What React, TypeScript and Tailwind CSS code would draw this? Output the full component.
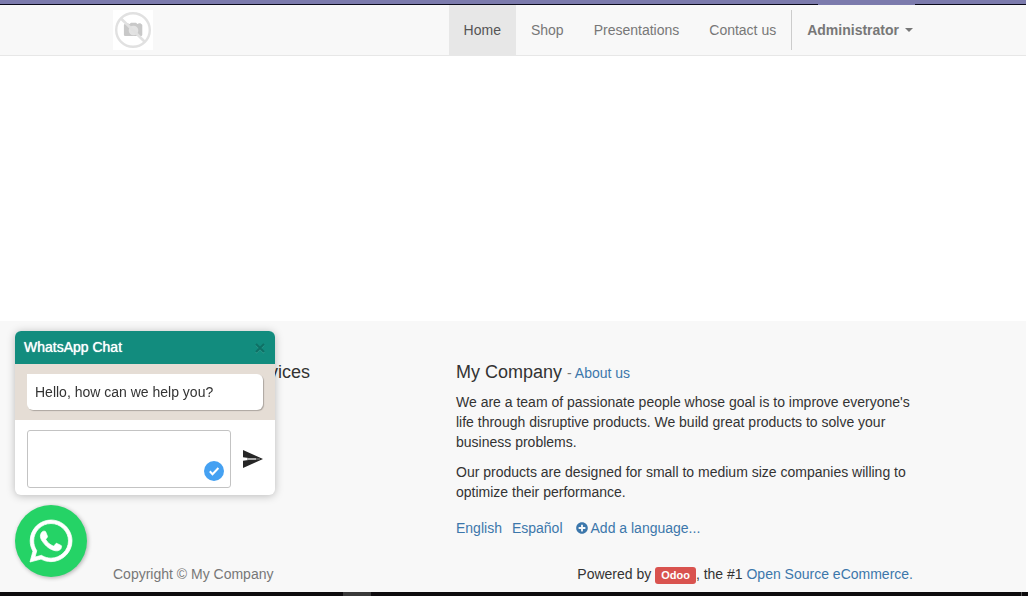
import { useState } from "react";
import { FaPlusCircle, FaWhatsapp } from "react-icons/fa";

const navItems = [
  { label: "Home", active: true },
  { label: "Shop", active: false },
  { label: "Presentations", active: false },
  { label: "Contact us", active: false },
];

function PlaceholderLogo() {
  return (
    <svg viewBox="0 0 40 40" className="size-10 bg-white" role="img" aria-label="Company logo">
      <path
        d="M12 14h1v-.8h2.500v.8h1l1.500-1.300h5l1.500 1.300h.8v-.8h2.500v.8q1.500 0 1.500 1.200v9.600q0 1.200-1.200 1.200h-16q-1.200 0-1.200-1.200v-9.600q0-1.200 1.100-1.200z"
        fill="#c8c8c8"
      />
      <circle cx="20.500" cy="20.500" r="4.800" fill="#e3e3e3" />
      <circle cx="20" cy="20" r="16.800" fill="none" stroke="#e1e1e1" strokeWidth="2.400" />
      <path d="M8 8.500L32 32" stroke="#e1e1e1" strokeWidth="2.600" />
    </svg>
  );
}

function Header() {
  return (
    <header>
      <div className="flex h-[5px] flex-col bg-[#7c7bad]">
        <div className="mt-auto flex h-px">
          <div className="w-[818px] bg-[#0b0b1c]" />
          <div className="w-[97px]" />
          <div className="grow bg-[#0b0b1c]" />
        </div>
      </div>
      <div className="border-b border-[#e7e7e7] bg-[#f8f8f8]">
        <div className="mx-auto flex h-[50px] max-w-[830px] items-center px-[15px]">
          <a href="#home" className="mr-auto">
            <PlaceholderLogo />
          </a>
          <nav className="-mb-px flex self-stretch">
            {navItems.map((item) => (
              <a
                key={item.label}
                href="#nav"
                className={
                  item.active
                    ? "flex items-center bg-[#e7e7e7] px-[15px] pb-px text-[#555]"
                    : "flex items-center px-[15px] pb-px text-[#777]"
                }
              >
                {item.label}
              </a>
            ))}
          </nav>
          <div className="flex h-10 items-center border-l border-[#ccc] pl-[15px]">
            <button type="button" className="flex items-center gap-1.5 font-bold text-[#777]">
              Administrator
              <svg viewBox="0 0 8 4" className="h-1 w-2" aria-hidden="true">
                <path d="M0 0h8L4 4z" fill="currentColor" />
              </svg>
            </button>
          </div>
        </div>
      </div>
    </header>
  );
}

function Footer() {
  return (
    <footer className="bg-[#f8f8f8] pb-[7px]">
      <div className="mx-auto max-w-[830px] px-[15px] pt-[41px]">
        <div className="grid grid-cols-[343fr_457fr]">
          <h4 className="text-[18px] leading-5">Our Products &amp; Services</h4>
          <div>
            <h4 className="text-[18px] leading-5">
              My Company{" "}
              <small className="text-sm leading-5 text-[#3c77ab]">
                <span className="text-[#777]">-</span> <a href="#about">About us</a>
              </small>
            </h4>
            <p className="mt-[9px]">
              We are a team of passionate people whose goal is to improve everyone's life through
              disruptive products. We build great products to solve your business problems.
            </p>
            <p className="mt-2.5">
              Our products are designed for small to medium size companies willing to optimize their
              performance.
            </p>
            <ul className="mt-4 flex gap-2.5 text-[#3c77ab]">
              <li>
                <a href="#en">English</a>
              </li>
              <li>
                <a href="#es">Español</a>
              </li>
              <li className="pl-[3px]">
                <a href="#add" className="flex items-center gap-[3px]">
                  <FaPlusCircle className="size-3" />
                  Add a language...
                </a>
              </li>
            </ul>
          </div>
        </div>
        <div className="mt-[26px] flex justify-between">
          <span className="text-[#777]">Copyright © My Company</span>
          <span>
            Powered by{" "}
            <a
              href="#odoo"
              className="rounded-[3px] bg-[#d9534f] px-1.5 pt-0.5 pb-[3px] text-[11px] font-bold text-white"
            >
              Odoo
            </a>
            , the #1{" "}
            <a href="#ecommerce" className="text-[#3c77ab]">
              Open Source eCommerce.
            </a>
          </span>
        </div>
      </div>
    </footer>
  );
}

function ChatWidget() {
  const [open, setOpen] = useState(true);
  return (
    <div className="fixed bottom-[19px] left-[15px] flex flex-col items-start gap-2.5">
      {open && (
        <section className="w-[260px] overflow-hidden rounded-md bg-white shadow-[0_1px_8px_rgba(0,0,0,0.25)]">
          <div className="flex h-[33px] items-center justify-between bg-[#128c7e] px-[9px]">
            <h2 className="pb-0.5 text-white [text-shadow:0_0_1px_#fff]">WhatsApp Chat</h2>
            <button type="button" aria-label="Close chat" onClick={() => setOpen(false)}>
              <svg viewBox="0 0 12 12" className="size-3" aria-hidden="true">
                <path d="M2 3l8 8M10 3l-8 8" stroke="#3b9f92" strokeWidth="1.5" />
                <path d="M2 2l8 8M10 2l-8 8" stroke="#0e7065" strokeWidth="2" />
              </svg>
            </button>
          </div>
          <div className="bg-[#e5ddd5] px-3 py-2.5">
            <p className="rounded-md rounded-tl-none bg-white px-2 py-2 shadow-[1px_1px_1px_rgba(0,0,0,0.25)]">
              Hello, how can we help you?
            </p>
          </div>
          <form
            className="flex items-center gap-3 px-3 pt-2.5 pb-[7px]"
            onSubmit={(event) => event.preventDefault()}
          >
            <div className="relative flex grow">
              <textarea
                aria-label="Message"
                className="h-[58px] w-full resize-none rounded-[3px] border border-[#c3c3c3] bg-white p-2 outline-none"
              />
              <svg
                viewBox="0 0 20 20"
                className="absolute right-[7px] bottom-[7px] size-5"
                aria-hidden="true"
              >
                <circle cx="10" cy="10" r="10" fill="#45a1f2" />
                <path d="M5.800 10.300l2.700 2.900 5.900-6.200" fill="none" stroke="#fff" strokeWidth="2" />
              </svg>
            </div>
            <button type="submit" aria-label="Send">
              <svg viewBox="0 0 20 18" className="h-[18px] w-5" aria-hidden="true">
                <path d="M0 18l20-9L0 0v7.300l13 1.700-13 1.700z" fill="#262626" />
                <path d="M0 8h13v2H0z" fill="#fff" />
                <path d="M4 8h13v2H4z" fill="#777" opacity="0.6" />
              </svg>
            </button>
          </form>
        </section>
      )}
      <button
        type="button"
        aria-label="Open WhatsApp chat"
        onClick={() => setOpen(!open)}
        className="flex size-[72px] items-center justify-center rounded-full bg-[#25d366] text-white shadow-[1px_1px_4px_rgba(0,0,0,0.3)]"
      >
        <FaWhatsapp className="size-12" stroke="currentColor" strokeWidth="8" />
      </button>
    </div>
  );
}

export default function App() {
  return (
    <div className="flex min-h-screen flex-col bg-white pr-0.5 font-['Liberation_Sans',Arial,sans-serif] text-sm leading-5 text-[#333]">
      <Header />
      <main className="grow" />
      <Footer />
      <div className="-mr-0.5 flex h-1 bg-[#0e0c0e]">
        <div className="ml-[343px] w-7 bg-[#393939]" />
        <div className="mr-1.5 ml-auto w-px bg-[#555]" />
      </div>
      <ChatWidget />
    </div>
  );
}
